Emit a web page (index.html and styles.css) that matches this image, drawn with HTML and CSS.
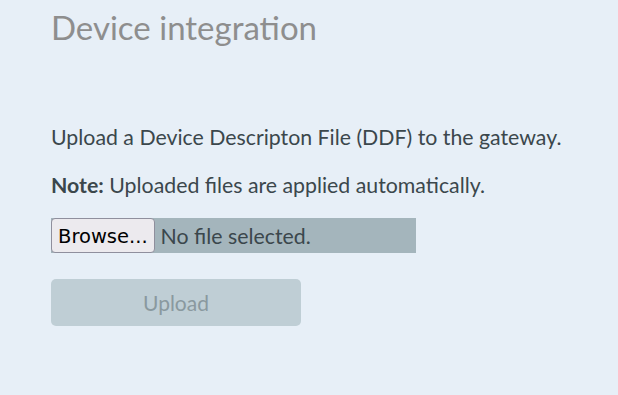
FILE: index.html
```html
<!DOCTYPE html>
<html lang="en">
<head>
  <meta charset="UTF-8">
  <title>Device integration</title>
  <link rel="stylesheet" href="styles.css">
</head>
<body>

  <div class="page">
    <h1 class="title">Device integration</h1>

    <p class="text">Upload a Device Descripton File (DDF) to the gateway.</p>
    <p class="text"><b>Note:</b> Uploaded files are applied automatically.</p>

    <div class="file-field">
      <span class="browse">Browse...</span>
      <span class="file-name">No file selected.</span>
    </div>

    <button class="upload" disabled>Upload</button>
  </div>

</body>
</html>
```
FILE: styles.css
```css
body {
  margin: 0;
  background-color: #e7eff7;
  font-family: Lato, "Open Sans", sans-serif;
}
.page {
  padding: 0 51px;
}
.title {
  margin: 0;
  padding-top: 5px;
  font-size: 33px;
  font-weight: normal;
  color: #8e8e8e;
  line-height: 44px;
}
.text {
  margin: 0;
  margin-top: 18px;
  font-size: 21.3px;
  line-height: 30px;
  color: #3b474c;
}
.title + .text {
  margin-top: 73px;
}
.text b {
  font-weight: bold;
}
.file-field {
  display: flex;
  align-items: center;
  width: 365px;
  height: 35px;
  margin-top: 18px;
  background-color: #a4b5bc;
}
.browse {
  box-sizing: border-box;
  height: 35px;
  padding: 2px 6px 0;
  display: flex;
  align-items: center;
  font-family: "DejaVu Sans", sans-serif;
  font-size: 19.5px;
  color: #000;
  background-color: #eceaee;
  border: 1px solid #8f8f9d;
  border-radius: 4px;
}
.file-name {
  padding-left: 6px;
  font-size: 21.3px;
  color: #3b474c;
}
.upload {
  display: block;
  width: 250px;
  height: 47px;
  margin-top: 26px;
  border: none;
  border-radius: 5px;
  background-color: #bfced5;
  color: #8a999f;
  font-family: Lato, sans-serif;
  font-size: 21px;
}
```
